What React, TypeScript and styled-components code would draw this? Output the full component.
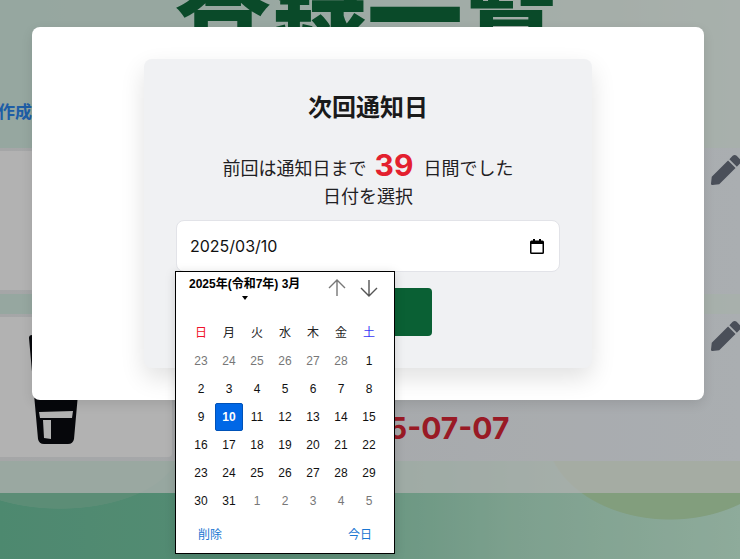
import React from "react";
import styled, { createGlobalStyle } from "styled-components";
import { FaPen } from "react-icons/fa";

const Global = createGlobalStyle`
  html, body { margin: 0; padding: 0; height: 100%; overflow: hidden; }
  * { box-sizing: border-box; }
  body { font-family: "Inter", "Noto Sans CJK JP", sans-serif; }
`;

const Page = styled.div`
  position: relative;
  width: 740px;
  height: 559px;
  overflow: hidden;
  background:
    radial-gradient(ellipse 125px 90px at 670px 430px, #bae2b4 99%, transparent 100%),
    radial-gradient(ellipse 120px 62px at 60px 447px, #85cbaa 99%, transparent 100%),
    linear-gradient(90deg, #6fc4a0 0%, #79c9a6 30%, #b4e6cc 70%, #ccf5de 100%);
`;

const Panel = styled.main`
  margin-top: -32px;
  height: 525px;
  background: rgba(255, 255, 255, 0.72);
`;

const Heading = styled.h1`
  margin: 0;
  font-size: 96px;
  line-height: 96px;
  font-weight: 900;
  text-align: center;
  color: #0f6a3c;
  padding-right: 6px;
`;

const CreateLink = styled.a`
  display: block;
  margin: 35px 0 23px -2px;
  font-size: 17px;
  line-height: 26px;
  font-weight: 700;
  color: #2b86ee;
`;

const Rows = styled.div`
  display: flex;
  flex-direction: column;
  gap: 20px;
`;

const Row = styled.article`
  display: flex;
  height: 146px;
  background: linear-gradient(90deg, #eceef0 0%, #f4f9fe 100%);

  &:last-child {
    height: 147px;
  }
`;

const IconCell = styled.div`
  width: 172px;
  flex: none;
  margin: 3px 0 4px 0;
  padding: 5px 0 0 28px;
  display: flex;
  align-items: center;
  background: #ffffff;
  border-radius: 0 4px 4px 0;
`;

const DetailCell = styled.div`
  flex: 1;
  display: flex;
  justify-content: space-between;
  align-items: flex-start;
  padding: 7px 0 0 158px;
`;

const DueDate = styled.span`
  align-self: flex-end;
  padding-bottom: 15px;
  font-size: 30px;
  line-height: 36px;
  font-weight: 700;
  color: #dc2636;
`;

const EditIcon = styled(FaPen)`
  width: 30px;
  height: 30px;
  margin-right: -1px;
  color: #6b7280;
`;

const Overlay = styled.div`
  position: absolute;
  inset: 0;
  padding: 27px 36px 0 32px;
  background: rgba(0, 0, 0, 0.3);
`;

const Modal = styled.section`
  height: 373px;
  display: flex;
  justify-content: center;
  padding-top: 32px;
  background: #ffffff;
  border-radius: 8px;
  box-shadow: 0 4px 12px rgba(0, 0, 0, 0.1);
`;

const Card = styled.div`
  width: 448px;
  height: 309px;
  display: flex;
  flex-direction: column;
  align-items: center;
  padding: 31px 32px 32px;
  background: #f0f1f3;
  border-radius: 8px;
  box-shadow: 0 10px 25px rgba(0, 0, 0, 0.12);
`;

const Title = styled.h2`
  margin: 0 0 29px;
  font-size: 24px;
  line-height: 36px;
  font-weight: 700;
  color: #1a1a1a;
`;

const Line = styled.p`
  margin: 0;
  font-size: 18px;
  line-height: 28px;
  color: #1f2023;
  display: flex;
  justify-content: center;
`;

const Count = styled.span`
  margin: -4px 10px 0 8px;
  font-size: 30px;
  line-height: 28px;
  font-weight: 700;
  color: #e3202e;
`;

const DateField = styled.div`
  position: relative;
  width: 384px;
  height: 52px;
  margin-top: 9px;
  display: flex;
  align-items: center;
  justify-content: space-between;
  padding: 0 15px 0 13px;
  background: #ffffff;
  border: 1px solid #e2e3e8;
  border-radius: 8px;
  font-size: 16px;
  color: #111;
`;

const SaveButton = styled.button`
  width: 128px;
  height: 48px;
  margin-top: 16px;
  border: 0;
  border-radius: 4px;
  background: #0a6034;
  color: #fff;
  font: inherit;
`;

const Popup = styled.div`
  position: absolute;
  z-index: 2;
  left: -2px;
  top: 50px;
  width: 220px;
  height: 283px;
  padding: 0 10px 0 11px;
  display: flex;
  flex-direction: column;
  background: #fff;
  border: 1px solid #000;
  box-shadow: 0 2px 10px rgba(0, 0, 0, 0.15);
  font-family: "Liberation Sans", "Noto Sans CJK JP", sans-serif;
  font-size: 12px;
  color: #111;
`;

const PopupHeader = styled.div`
  height: 45px;
  display: flex;
  justify-content: space-between;
  padding: 5px 0 0 2px;
`;

const MonthButton = styled.div`
  display: flex;
  flex-direction: column;
  align-items: center;
  gap: 5px;
  font-size: 12px;
  line-height: 14px;
  font-weight: 700;
  color: #000;
`;

const Caret = styled.span`
  width: 0;
  height: 0;
  border-left: 3.5px solid transparent;
  border-right: 3.5px solid transparent;
  border-top: 4px solid #000;
`;

const Steppers = styled.div`
  display: flex;
  gap: 14px;
  margin-right: 6px;
`;

const Arrow = styled.svg`
  width: 18px;
  height: 18px;
  margin-top: 2px;
  fill: none;
  stroke-width: 1.4;
`;

const Grid = styled.div`
  display: grid;
  grid-template-columns: repeat(7, 28px);
  grid-auto-rows: 28px;
`;

const WeekGrid = styled(Grid)`
  margin-bottom: 2px;
`;

const Weekday = styled.div<{ $tone?: string }>`
  display: flex;
  align-items: center;
  justify-content: center;
  color: ${(p) => p.$tone || "#222"};
`;

const Day = styled.div<{ $muted?: boolean; $selected?: boolean }>`
  display: flex;
  align-items: center;
  justify-content: center;
  border-radius: 2px;
  color: ${(p) => (p.$selected ? "#fff" : p.$muted ? "#777" : "#111")};
  background: ${(p) => (p.$selected ? "#0067e6" : "transparent")};
  border: ${(p) => (p.$selected ? "1px solid #0052b8" : "0")};
  font-weight: ${(p) => (p.$selected ? 700 : 400)};
`;

const PopupFooter = styled.div`
  display: flex;
  justify-content: space-between;
  padding: 12px 12px 0 11px;
  line-height: 16px;
`;

const FooterLink = styled.span`
  color: #1976d2;
`;

const Cup = () => (
  <svg width="56" height="110" viewBox="0 0 56 110">
    <path
      fillRule="evenodd"
      fill="#0a0b10"
      d="M1 3 Q1 0 4 0 L52 0 Q55 0 55 3 L46 104 Q45 109 40 109 L16 109 Q11 109 10 104 Z M11 77 L45 76 L44 83 L12 83 Z M15 85 L23 85 L23 104 L16 103 Z"
    />
  </svg>
);

const weekdays = ["日", "月", "火", "水", "木", "金", "土"];
const days: { n: number; muted?: boolean }[] = [
  ...[23, 24, 25, 26, 27, 28].map((n) => ({ n, muted: true })),
  ...Array.from({ length: 31 }, (_, i) => ({ n: i + 1 })),
  ...[1, 2, 3, 4, 5].map((n) => ({ n, muted: true })),
];

export default function App() {
  return (
    <Page>
      <Global />
      <Panel>
        <Heading>登録一覧</Heading>
        <CreateLink>作成</CreateLink>
        <Rows>
          <Row>
            <IconCell />
            <DetailCell>
              <span />
              <EditIcon />
            </DetailCell>
          </Row>
          <Row>
            <IconCell>
              <Cup />
            </IconCell>
            <DetailCell>
              <DueDate>2025-07-07</DueDate>
              <EditIcon />
            </DetailCell>
          </Row>
        </Rows>
      </Panel>
      <Overlay>
        <Modal>
          <Card>
            <Title>次回通知日</Title>
            <Line>
              前回は通知日まで<Count>39</Count>日間でした
            </Line>
            <Line>日付を選択</Line>
            <DateField>
              <span>2025/03/10</span>
              <svg width="14" height="15" viewBox="0 0 14 15">
                <path
                  fill="#000"
                  d="M3 0h2v1.5h4V0h2v1.5h1.5A1.5 1.5 0 0 1 14 3v10.5a1.5 1.5 0 0 1-1.5 1.5h-11A1.5 1.5 0 0 1 0 13.5V3a1.5 1.5 0 0 1 1.5-1.5H3V0zM1.5 5v8.5h11V5h-11z"
                />
              </svg>
              <Popup>
                <PopupHeader>
                  <MonthButton>
                    2025年(令和7年) 3月
                    <Caret />
                  </MonthButton>
                  <Steppers>
                    <Arrow viewBox="0 0 18 18" stroke="#777">
                      <path d="M9 1v16M1 9l8-8 8 8" />
                    </Arrow>
                    <Arrow viewBox="0 0 18 18" stroke="#555">
                      <path d="M9 1v16M1 9l8 8 8-8" />
                    </Arrow>
                  </Steppers>
                </PopupHeader>
                <WeekGrid>
                  {weekdays.map((w, i) => (
                    <Weekday key={w} $tone={i === 0 ? "#f0102a" : i === 6 ? "#3838f5" : undefined}>
                      {w}
                    </Weekday>
                  ))}
                </WeekGrid>
                <Grid>
                  {days.map((d, i) => (
                    <Day key={i} $muted={d.muted} $selected={!d.muted && d.n === 10}>
                      {d.n}
                    </Day>
                  ))}
                </Grid>
                <PopupFooter>
                  <FooterLink>削除</FooterLink>
                  <FooterLink>今日</FooterLink>
                </PopupFooter>
              </Popup>
            </DateField>
            <SaveButton>保存</SaveButton>
          </Card>
        </Modal>
      </Overlay>
    </Page>
  );
}
